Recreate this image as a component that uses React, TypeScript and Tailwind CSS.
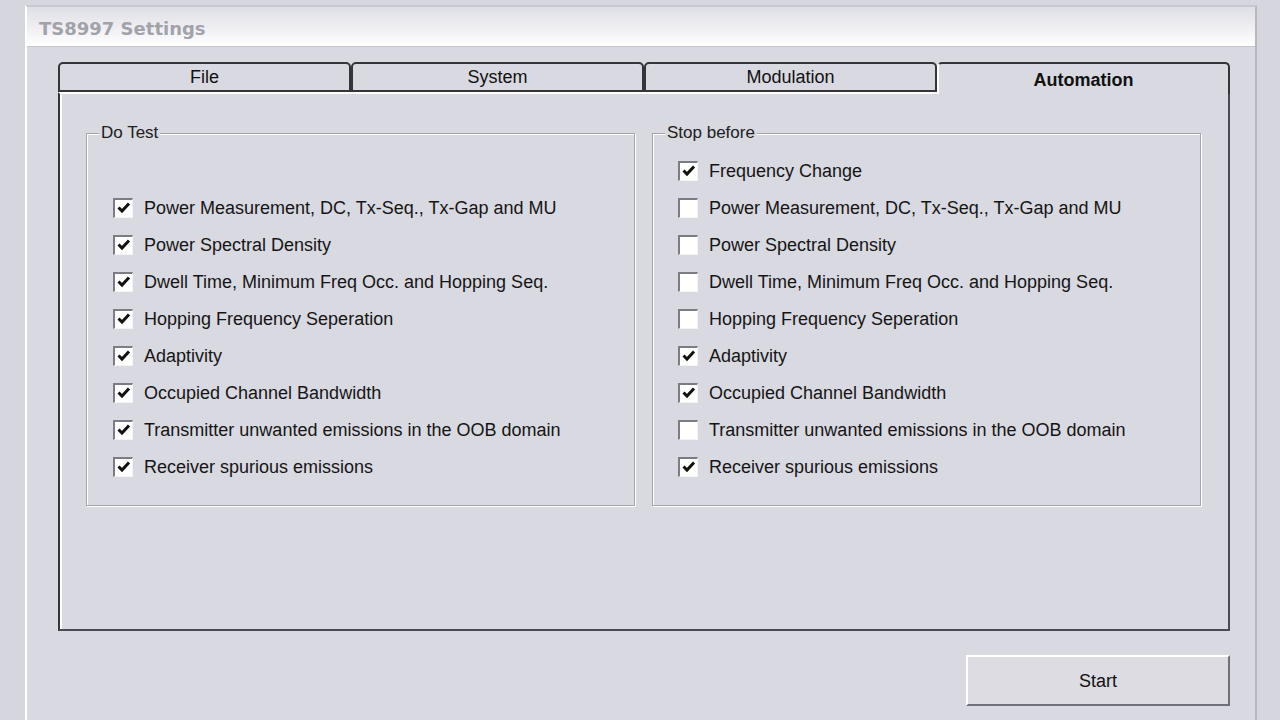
import React, { useState } from 'react';

const doTestItems = [
    'Power Measurement, DC, Tx-Seq., Tx-Gap and MU',
    'Power Spectral Density',
    'Dwell Time, Minimum Freq Occ. and Hopping Seq.',
    'Hopping Frequency Seperation',
    'Adaptivity',
    'Occupied Channel Bandwidth',
    'Transmitter unwanted emissions in the OOB domain',
    'Receiver spurious emissions',
];

const stopBeforeItems = ['Frequency Change', ...doTestItems];

const tabs = ['File', 'System', 'Modulation', 'Automation'];

const CheckRow: React.FC<{ label: string; checked: boolean; onToggle: () => void }> = ({ label, checked, onToggle }) => (
    <div className="flex items-center h-[37px] gap-[11px] cursor-default" onClick={onToggle}>
        <div className="w-[20px] h-[20px] bg-white border-t-2 border-l-2 border-[#7c7c84] border-r border-b border-r-[#f4f4f6] border-b-[#f4f4f6] flex items-center justify-center">
            {checked && (
                <svg width="16" height="16" viewBox="0 0 16 16">
                    <path d="M2.5 7.5 L6 11 L13 3.5" fill="none" stroke="#111" strokeWidth="3" />
                </svg>
            )}
        </div>
        <span className="text-[18px] leading-none text-[#151515] whitespace-nowrap">{label}</span>
    </div>
);

const GroupBox: React.FC<{ title: string; children: React.ReactNode }> = ({ title, children }) => (
    <div className="relative w-[549px] h-[373px] border border-[#a4a4ac] shadow-[inset_1px_1px_0_#fff,1px_1px_0_#fff]">
        <span className="absolute -top-[11px] left-[12px] px-[2px] bg-[#d9d9e1] text-[17px] leading-[20px] text-[#202020]">{title}</span>
        {children}
    </div>
);

export default function App() {
    const [doTest, setDoTest] = useState<boolean[]>(doTestItems.map(() => true));
    const [stopBefore, setStopBefore] = useState<boolean[]>([true, false, false, false, false, true, true, false, true]);
    const [activeTab, setActiveTab] = useState(3);

    const toggle = (list: boolean[], set: (v: boolean[]) => void, i: number) => {
        const next = [...list];
        next[i] = !next[i];
        set(next);
    };

    return (
        <div className="w-[1280px] h-[720px] overflow-hidden bg-[#d6d6de] pt-[5px] pl-[25px] pr-[23px]" style={{ fontFamily: '"Liberation Sans", Arial, sans-serif' }}>
            <div className="h-full border-l-2 border-t-2 border-r-2 border-l-white border-t-[#c8c8d0] border-r-[#b8b8c0] flex flex-col">
                <div className="h-[40px] flex items-center pl-[12px] bg-gradient-to-b from-[#dedee6] via-[#eeeef2] to-white border-b border-[#c6c6ce]">
                    <span className="text-[18px] font-bold text-[#a2a2aa] pt-[4px]" style={{ fontFamily: '"DejaVu Sans", Verdana, sans-serif' }}>TS8997 Settings</span>
                </div>
                <div className="flex-1 bg-[#d9d9e1] pt-[15px] pl-[31px] pr-[25px] flex flex-col">
                    <div className="flex h-[30px]">
                        {tabs.map((t, i) => {
                            const active = i === activeTab;
                            return (
                                <div
                                    key={t}
                                    onClick={() => setActiveTab(i)}
                                    className={`flex-1 flex items-center justify-center border-t-2 border-l-2 border-r-2 border-[#34343a] rounded-t-[5px] text-[18px] text-[#111] ${
                                        active
                                            ? 'font-bold relative z-10 h-[32px] bg-[#d9d9e1] border-l-white border-b-0 pt-[2px]'
                                            : 'border-b-2 bg-[#d9d9e1] pt-[1px]'
                                    }`}
                                >
                                    {t}
                                </div>
                            );
                        })}
                    </div>
                    <div className="h-[539px] border-t-2 border-t-white border-l-2 border-l-[#34343a] border-r-2 border-r-[#4a4a52] border-b-2 border-b-[#4a4a52] shadow-[inset_2px_0_0_#fff] pt-[39px] pl-[26px] flex gap-[17px]">
                        <GroupBox title="Do Test">
                            <div className="pt-[55px] pl-[26px]">
                                {doTestItems.map((label, i) => (
                                    <CheckRow key={label} label={label} checked={doTest[i]} onToggle={() => toggle(doTest, setDoTest, i)} />
                                ))}
                            </div>
                        </GroupBox>
                        <GroupBox title="Stop before">
                            <div className="pt-[18px] pl-[25px]">
                                {stopBeforeItems.map((label, i) => (
                                    <CheckRow key={label} label={label} checked={stopBefore[i]} onToggle={() => toggle(stopBefore, setStopBefore, i)} />
                                ))}
                            </div>
                        </GroupBox>
                    </div>
                    <div className="flex justify-end pt-[24px]">
                        <button className="w-[264px] h-[51px] bg-[#dcdce2] border-t-2 border-l-2 border-t-white border-l-white border-b-2 border-r-2 border-b-[#707078] border-r-[#707078] text-[18px] text-[#111] pt-[2px]">
                            Start
                        </button>
                    </div>
                </div>
            </div>
        </div>
    );
}
